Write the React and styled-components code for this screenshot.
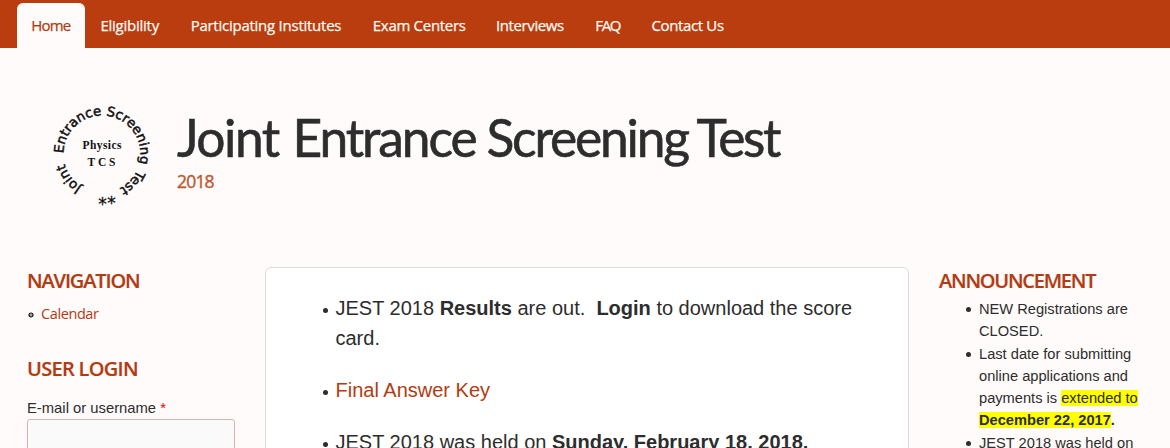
import styled, { createGlobalStyle } from 'styled-components'

const links = [
    { label: 'Home', width: 39, spacing: -0.8, active: true },
    { label: 'Eligibility', width: 60, spacing: -0.25 },
    { label: 'Participating Institutes', width: 152, spacing: -0.25 },
    { label: 'Exam Centers', width: 93, spacing: -0.3 },
    { label: 'Interviews', width: 69, spacing: -0.4 },
    { label: 'FAQ', width: 26, spacing: -1.3 },
    { label: 'Contact Us', width: 74, spacing: -0.35 },
]

const siteName = [
    { text: 'Joint', spacing: -1.5, width: 115.5 },
    { text: 'Entrance', spacing: -2.1, width: 194 },
    { text: 'Screening', spacing: -2.2, width: 210 },
    { text: 'Test', spacing: -2.4, width: 90 },
]

// offsets run clockwise along the ring, in px
const ringWords = [
    { text: 'Joint', offset: 0 },
    { text: 'Entrance', offset: 39.5 },
    { text: 'Screening', offset: 103.5 },
    { text: 'Test', offset: 176 },
]

const App = () => {
    return (
        <>
            <GlobalStyle />
            <Page>
                <NavBar>
                    {links.map((link) => (
                        <Tab
                            key={link.label}
                            href='#'
                            $width={link.width}
                            $spacing={link.spacing}
                            $active={link.active}>
                            {link.label}
                        </Tab>
                    ))}
                </NavBar>
                <Header>
                    <Logo />
                    <div>
                        <SiteName>
                            {siteName.map((word) => (
                                <Word
                                    key={word.text}
                                    $width={word.width}
                                    $spacing={word.spacing}>
                                    {word.text}{' '}
                                </Word>
                            ))}
                        </SiteName>
                        <Slogan>2018</Slogan>
                    </div>
                </Header>
                <Columns>
                    <Sidebar>
                        <BlockTitle $spacing={-1.15}>NAVIGATION</BlockTitle>
                        <Menu>
                            <Ring viewBox='0 0 6 6'>
                                <circle cx='3' cy='3' r='2' />
                            </Ring>
                            <MenuLink href='#'>Calendar</MenuLink>
                        </Menu>
                        <BlockTitle $spacing={-0.7}>USER LOGIN</BlockTitle>
                        <Label htmlFor='name'>
                            E-mail or username <Required>*</Required>
                        </Label>
                        <Input id='name' />
                    </Sidebar>
                    <Content>
                        <NewsList>
                            <li>
                                JEST 2018 <b>Results</b> are out.&nbsp; <b>Login</b> to
                                download the score card.
                            </li>
                            <li>
                                <a href='#'>Final Answer Key</a>
                            </li>
                            <li>
                                JEST 2018 was held on <b>Sunday, February 18, 2018.</b>
                            </li>
                        </NewsList>
                    </Content>
                    <aside>
                        <BlockTitle $spacing={-1.25}>ANNOUNCEMENT</BlockTitle>
                        <Announcements>
                            <li>NEW Registrations are CLOSED.</li>
                            <li>
                                Last date for submitting online applications and payments
                                is{' '}
                                <Marked>
                                    extended to <b>December 22, 2017</b>
                                </Marked>
                                <b>.</b>
                            </li>
                            <li>JEST 2018 was held on</li>
                        </Announcements>
                    </aside>
                </Columns>
            </Page>
        </>
    )
}

const Logo = () => (
    <LogoSvg viewBox='0 0 110 110'>
        <defs>
            <path id='ring' d='M 34.8 86.8 A 38.5 38.5 0 1 1 74 87.5' />
        </defs>
        {ringWords.map((word) => (
            <RingText key={word.text}>
                <textPath href='#ring' startOffset={word.offset}>
                    {word.text}
                </textPath>
            </RingText>
        ))}
        <CenterText x='55' y='49' textLength='39'>
            Physics
        </CenterText>
        <CenterText x='54.5' y='66' textLength='28'>
            T C S
        </CenterText>
        <Star x='55.5' y='109.5'>
            *
        </Star>
        <Star x='64.5' y='108.5'>
            *
        </Star>
    </LogoSvg>
)

const GlobalStyle = createGlobalStyle`
    body {
        margin: 0;
        background: #fffbfb;
        color: #2d2d2d;
        font-family: 'Liberation Sans', Arial, sans-serif;
    }
    a {
        color: #b13c12;
        text-decoration: none;
    }
`

const Page = styled.div`
    height: 448px;
    overflow: hidden;
`

const NavBar = styled.nav`
    display: flex;
    gap: 1.7px;
    height: 45px;
    padding: 3px 0 0 17px;
    background: #b93d0e;
`

const Tab = styled.a`
    box-sizing: content-box;
    width: ${(props) => props.$width}px;
    padding: 0 14.25px;
    border-radius: 6px 6px 0 0;
    background: ${(props) => (props.$active ? '#fffbfb' : 'transparent')};
    color: ${(props) => (props.$active ? '#b13c12' : '#fffbf5')};
    font-family: 'Open Sans', sans-serif;
    font-size: 15px;
    line-height: 45px;
    letter-spacing: ${(props) => props.$spacing}px;
    white-space: nowrap;
    -webkit-text-stroke: 0.25px currentColor;
`

const Header = styled.header`
    display: flex;
    height: 162px;
    padding: 52px 0 0 47px;
    box-sizing: border-box;
`

const LogoSvg = styled.svg`
    width: 110px;
    height: 110px;
    margin-right: 20px;
    overflow: visible;
`

const RingText = styled.text`
    font-family: 'DejaVu Sans', sans-serif;
    font-size: 13.3px;
    fill: #111;
    stroke: #111;
    stroke-width: 0.5px;
`

const CenterText = styled.text`
    font-family: 'Liberation Serif', serif;
    font-size: 11.5px;
    font-weight: 700;
    text-anchor: middle;
    fill: #111;
`

const Star = styled.text`
    font-family: 'DejaVu Sans', sans-serif;
    font-size: 17px;
    text-anchor: middle;
    fill: #111;
    stroke: #111;
    stroke-width: 0.3px;
`

const SiteName = styled.h1`
    display: flex;
    margin: 2px 0 0;
    font-family: Lato, 'Open Sans', sans-serif;
    font-size: 51.5px;
    font-weight: 400;
    line-height: 70px;
    white-space: nowrap;
    -webkit-text-stroke: 0.6px currentColor;
`

const Word = styled.span`
    width: ${(props) => props.$width}px;
    letter-spacing: ${(props) => props.$spacing}px;
`

const Slogan = styled.div`
    margin-top: -3px;
    color: #bd5a30;
    font-family: 'Open Sans', sans-serif;
    font-size: 17.5px;
    line-height: 24px;
    letter-spacing: -0.8px;
    -webkit-text-stroke: 0.4px currentColor;
`

const Columns = styled.main`
    display: grid;
    grid-template-columns: 208px 644px 205px;
    column-gap: 30px;
    padding: 57px 0 0 27px;
`

const Sidebar = styled.aside`
    display: flex;
    flex-direction: column;
`

const BlockTitle = styled.h2`
    margin: 0;
    color: #b13c12;
    font-family: 'Open Sans', sans-serif;
    font-size: 20px;
    font-weight: 600;
    line-height: 28px;
    letter-spacing: ${(props) => props.$spacing}px;
    white-space: nowrap;
    -webkit-text-stroke: 0.2px currentColor;
`

const Menu = styled.div`
    display: flex;
    align-items: center;
    gap: 7px;
    height: 22px;
    margin: 7px 0 31px 1px;
`

const Ring = styled.svg`
    width: 6px;
    height: 6px;
    margin-top: 4px;
    circle {
        fill: #aaa;
        stroke: #111;
        stroke-width: 1.2px;
    }
`

const MenuLink = styled.a`
    font-family: 'Open Sans', sans-serif;
    font-size: 14.5px;
    letter-spacing: -0.4px;
`

const Label = styled.label`
    margin-top: 14px;
    font-size: 14.8px;
    line-height: 22px;
`

const Required = styled.span`
    color: #e00;
`

const Input = styled.input`
    box-sizing: border-box;
    width: 208px;
    height: 40px;
    border: 1px solid #d9b5ac;
    border-radius: 3px;
    background: #fafafa;
`

const Content = styled.section`
    height: 240px;
    border: 1px solid #dfd9d9;
    border-radius: 6px;
    background: #fff;
    box-sizing: border-box;
`

const List = styled.ul`
    padding: 0;
    list-style: none;
    li::before {
        content: '';
        display: inline-block;
        width: 5px;
        height: 5px;
        margin: 0 8px 0 -13px;
        border-radius: 50%;
        background: #2d2d2d;
    }
`

const NewsList = styled(List)`
    margin: 25px 40px 0 69.5px;
    font-size: 20px;
    line-height: 30px;
    li {
        margin-bottom: 22px;
    }
    li::before {
        vertical-align: 2px;
    }
`

const Announcements = styled(List)`
    width: 166px;
    margin: 3px 0 0 40px;
    font-size: 14.65px;
    line-height: 22.3px;
    li::before {
        vertical-align: 2px;
    }
`

const Marked = styled.span`
    background: #ff0;
`

export default App
